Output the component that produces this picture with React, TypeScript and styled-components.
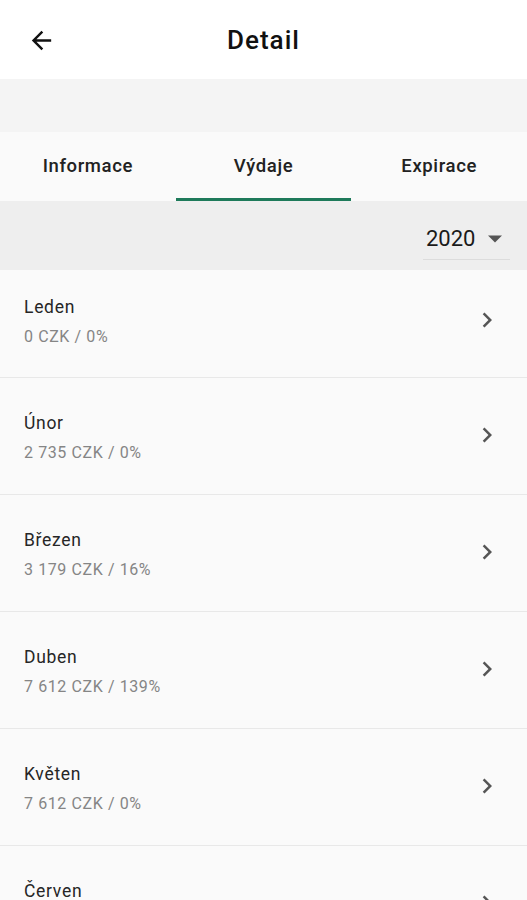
import { FC } from 'react';
import styled, { createGlobalStyle } from 'styled-components';

const GlobalStyle = createGlobalStyle`
  html, body {
    margin: 0;
    padding: 0;
    background: #fafafa;
    font-family: Roboto, 'Noto Sans', sans-serif;
  }
`;

const Page = styled.div`
  width: 527px;
  height: 900px;
  overflow: hidden;
  background: #fafafa;
`;

const Header = styled.header`
  height: 79px;
  background: #ffffff;
  display: grid;
  grid-template-columns: 79px 1fr 79px;
  align-items: center;
`;

const BackButton = styled.div`
  display: flex;
  align-items: center;
  padding-left: 27px;
  padding-top: 1px;
`;

const Title = styled.h1`
  margin: 0;
  text-align: center;
  font-family: 'Roboto Medium', Roboto, sans-serif;
  font-size: 26px;
  font-weight: 500;
  color: #111;
  letter-spacing: 1px;
`;

const Spacer = styled.div`
  height: 53px;
  background: #f4f4f4;
`;

const Tabs = styled.nav`
  height: 69px;
  background: #fafafa;
  display: grid;
  grid-template-columns: repeat(3, 1fr);
`;

const Tab = styled.div<{ $active?: boolean }>`
  display: flex;
  align-items: center;
  justify-content: center;
  font-family: 'Roboto Medium', Roboto, sans-serif;
  font-size: 18.5px;
  font-weight: 500;
  letter-spacing: 0.6px;
  color: #222;
  padding-top: 1px;
  box-sizing: border-box;
  border-bottom: 3px solid ${p => (p.$active ? '#1e7a5a' : 'transparent')};
`;

const FilterBar = styled.div`
  height: 69px;
  background: #eeeeee;
  display: flex;
  justify-content: flex-end;
  align-items: center;
  padding-right: 17px;
`;

const YearSelect = styled.div`
  display: flex;
  align-items: center;
  gap: 13px;
  width: 87px;
  height: 42px;
  box-sizing: border-box;
  padding-left: 3px;
  border-bottom: 1px solid #dcdcdc;
  margin-top: 7px;
  font-size: 22px;
  color: #1a1a1a;
`;

const List = styled.div`
  display: flex;
  flex-direction: column;
`;

const Row = styled.div`
  height: 117px;
  box-sizing: border-box;
  border-bottom: 1px solid #e8e8e8;
  display: flex;
  align-items: center;
  justify-content: space-between;
  padding: 2px 25px 0 24px;
  background: #fafafa;

  &:first-child {
    height: 108px;
    padding-top: 0;
    padding-bottom: 4px;
  }
`;

const RowText = styled.div`
  display: flex;
  flex-direction: column;
  gap: 10px;
`;

const Month = styled.div`
  font-size: 17.5px;
  letter-spacing: 0.7px;
  color: #262626;
`;

const Amount = styled.div`
  font-size: 16px;
  color: #858585;
  letter-spacing: 0.6px;
`;

const ChevronBox = styled.div`
  display: flex;
  margin-bottom: 4px;
`;

const months = [
  { name: 'Leden', value: '0 CZK / 0%' },
  { name: 'Únor', value: '2 735 CZK / 0%' },
  { name: 'Březen', value: '3 179 CZK / 16%' },
  { name: 'Duben', value: '7 612 CZK / 139%' },
  { name: 'Květen', value: '7 612 CZK / 0%' },
  { name: 'Červen', value: '7 612 CZK / 0%' },
];

const ArrowBack = () => (
  <svg width="29" height="29" viewBox="0 0 24 24">
    <path d="M20 11H7.83l5.59-5.59L12 4l-8 8 8 8 1.41-1.41L7.83 13H20v-2z" fill="#111" />
  </svg>
);

const Chevron = () => (
  <svg width="30" height="30" viewBox="0 0 24 24">
    <path d="M10 6 8.59 7.41 13.17 12l-4.58 4.59L10 18l6-6z" fill="#555" />
  </svg>
);

const Caret = () => (
  <svg width="14" height="8" viewBox="0 0 10 5">
    <path d="M0 0l5 5 5-5z" fill="#555" />
  </svg>
);

const App: FC = () => (
  <Page>
    <GlobalStyle />
    <Header>
      <BackButton>
        <ArrowBack />
      </BackButton>
      <Title>Detail</Title>
      <div />
    </Header>
    <Spacer />
    <Tabs>
      <Tab>Informace</Tab>
      <Tab $active>Výdaje</Tab>
      <Tab>Expirace</Tab>
    </Tabs>
    <FilterBar>
      <YearSelect>
        2020
        <Caret />
      </YearSelect>
    </FilterBar>
    <List>
      {months.map(m => (
        <Row key={m.name}>
          <RowText>
            <Month>{m.name}</Month>
            <Amount>{m.value}</Amount>
          </RowText>
          <ChevronBox>
            <Chevron />
          </ChevronBox>
        </Row>
      ))}
    </List>
  </Page>
);

export default App;
